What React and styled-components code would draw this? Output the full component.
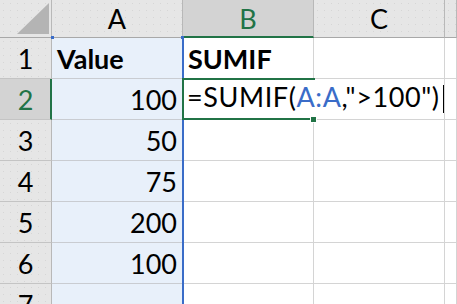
import React from "react";
import styled, { createGlobalStyle, css } from "styled-components";

const GREEN = "#217346";
const BLUE = "#3a6cc8";

const Global = createGlobalStyle`
  html, body { margin: 0; padding: 0; background: #fff; overflow: hidden; }
  * { box-sizing: border-box; }
`;

const Sheet = styled.div`
  position: relative;
  display: grid;
  grid-template-columns: 52px 131px 131px 131px 1fr;
  grid-template-rows: 38px repeat(7, 41px);
  width: 457px;
  height: 304px;
  overflow: hidden;
  font-family: Lato, "Open Sans", "Liberation Sans", sans-serif;
  font-size: 27px;
  color: #000;
`;

const headerBg = css`
  background-color: #e6e6e6;
  background-image: radial-gradient(circle, #d6d6d6 0.7px, transparent 1px);
  background-size: 7px 7px;
`;

const Corner = styled.div`
  ${headerBg};
  border-right: 1px solid #b8b8b8;
  border-bottom: 1px solid #a8a8a8;
  display: flex;
  align-items: flex-end;
  justify-content: flex-end;
  padding: 0 2px 3px 0;
`;

const ColHeader = styled.div`
  ${headerBg};
  border-right: 1px solid #b8b8b8;
  border-bottom: 1px solid #a8a8a8;
  display: flex;
  align-items: flex-end;
  justify-content: center;
  line-height: 27px;
  padding-bottom: 5px;
  ${(p) =>
    p.$selected &&
    css`
      background: #d3d3d3;
      color: ${GREEN};
      border-bottom: 2px solid ${GREEN};
      padding-bottom: 4px;
    `}
`;

const RowHeader = styled.div`
  ${headerBg};
  border-right: 1px solid #b8b8b8;
  border-bottom: 1px solid #c4c4c4;
  display: flex;
  align-items: flex-end;
  justify-content: center;
  line-height: 27px;
  padding-bottom: 6px;
  ${(p) =>
    p.$selected &&
    css`
      background: #d3d3d3;
      color: ${GREEN};
      border-right: 2px solid ${GREEN};
      padding-left: 1px;
    `}
`;

const Cell = styled.div`
  background: ${(p) => (p.$tint ? "#e8f0fa" : "#fff")};
  border-right: 1px solid ${(p) => (p.$hideRight ? "transparent" : p.$tint ? "#c9ccd1" : "#d4d4d4")};
  border-bottom: 1px solid ${(p) => (p.$tint ? "#c9ccd1" : "#d4d4d4")};
  display: flex;
  align-items: flex-end;
  justify-content: ${(p) => (p.$right ? "flex-end" : "flex-start")};
  padding: 0 5px 6px 5px;
  line-height: 27px;
  font-weight: ${(p) => (p.$bold ? 700 : 400)};
  white-space: nowrap;
  ${(p) =>
    p.$editing &&
    css`
      position: relative;
      z-index: 2;
      overflow: visible;
      padding-left: 4px;
    `}
`;

const Formula = styled.span`
  flex-shrink: 0;
  white-space: nowrap;
  letter-spacing: 0.6px;
`;

const Ref = styled.span`
  color: ${BLUE};
`;

const Caret = styled.span`
  display: inline-block;
  width: 1px;
  height: 28px;
  background: #000;
  margin-left: 3px;
  vertical-align: -6px;
`;

const RangeEdge = styled.div`
  position: absolute;
  left: 182px;
  top: 37px;
  bottom: 0;
  width: 2px;
  background: ${BLUE};
  z-index: 3;
`;

const RangeCorner = styled.div`
  position: absolute;
  left: ${(p) => p.$x}px;
  top: 36px;
  width: 3px;
  height: 3px;
  background: ${BLUE};
  z-index: 3;
`;

const ActiveBox = styled.div`
  position: absolute;
  left: 182px;
  top: 78px;
  width: 133px;
  height: 42px;
  border-top: 2px solid ${GREEN};
  border-left: 2px solid ${GREEN};
  border-bottom: 2px solid ${GREEN};
  z-index: 4;
  pointer-events: none;
`;

const FillHandle = styled.div`
  position: absolute;
  left: 310px;
  top: 116px;
  width: 7px;
  height: 7px;
  background: ${GREEN};
  border: 1px solid #fff;
  z-index: 5;
`;

const CornerTriangle = () => (
  <svg width="32" height="31" viewBox="0 0 32 31">
    <polygon points="32,0 32,31 0,31" fill="#b4b4b4" />
  </svg>
);

const rows = [
  { a: "Value", aBold: true, b: "SUMIF", bBold: true },
  { a: "100", b: "formula", selected: true },
  { a: "50" },
  { a: "75" },
  { a: "200" },
  { a: "100" },
  { a: "" },
];

export default function App() {
  return (
    <>
      <Global />
      <Sheet>
        <Corner>
          <CornerTriangle />
        </Corner>
        <ColHeader>A</ColHeader>
        <ColHeader $selected>B</ColHeader>
        <ColHeader>C</ColHeader>
        <ColHeader />
        {rows.map((r, i) => (
          <React.Fragment key={i}>
            <RowHeader $selected={r.selected}>{i + 1}</RowHeader>
            <Cell $tint $right={!r.aBold} $bold={r.aBold}>
              {r.a}
            </Cell>
            {r.b === "formula" ? (
              <Cell $editing $hideRight>
                <Formula>
                  =SUMIF(<Ref>A:A</Ref>,"&gt;100")
                  <Caret />
                </Formula>
              </Cell>
            ) : (
              <Cell $bold={r.bBold}>{r.b || ""}</Cell>
            )}
            <Cell />
            <Cell />
          </React.Fragment>
        ))}
        <RangeEdge />
        <RangeCorner $x={51} />
        <RangeCorner $x={181} />
        <ActiveBox />
        <FillHandle />
      </Sheet>
    </>
  );
}
